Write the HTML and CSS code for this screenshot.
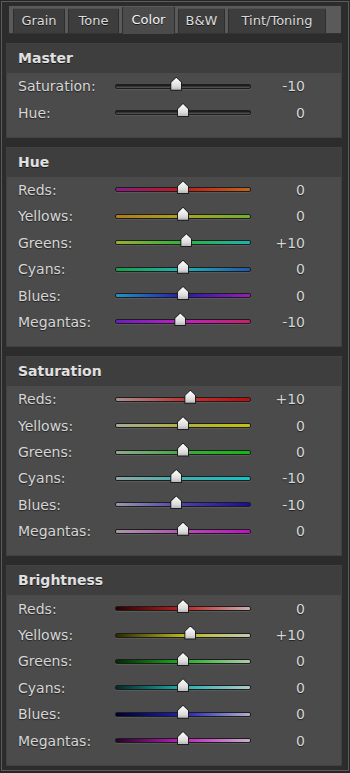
FILE: index.html
```html
<!doctype html>
<html>
  <head>
    <title>Color</title>
    <link rel="stylesheet" href="styles.css">
  </head>
  <body>
    <div class="window">
      <div class="tabs">
        <div class="tab tab-grain">Grain</div>
        <div class="tab tab-tone">Tone</div>
        <div class="tab tab-color tab-active">Color</div>
        <div class="tab tab-bw">B&amp;W</div>
        <div class="tab tab-tint">Tint/Toning</div>
      </div>

      <div class="panel">
        <div class="panel-head">Master</div>
        <div class="row"><span class="label">Saturation:</span><div class="track grey"><span class="thumb" style="left:45%"></span></div><span class="value">-10</span></div>
        <div class="row"><span class="label">Hue:</span><div class="track grey"><span class="thumb" style="left:50%"></span></div><span class="value">0</span></div>
      </div>

      <div class="panel">
        <div class="panel-head">Hue</div>
        <div class="row"><span class="label">Reds:</span><div class="track hue-reds"><span class="thumb" style="left:50%"></span></div><span class="value">0</span></div>
        <div class="row"><span class="label">Yellows:</span><div class="track hue-yellows"><span class="thumb" style="left:50%"></span></div><span class="value">0</span></div>
        <div class="row"><span class="label">Greens:</span><div class="track hue-greens"><span class="thumb" style="left:52.5%"></span></div><span class="value">+10</span></div>
        <div class="row"><span class="label">Cyans:</span><div class="track hue-cyans"><span class="thumb" style="left:50%"></span></div><span class="value">0</span></div>
        <div class="row"><span class="label">Blues:</span><div class="track hue-blues"><span class="thumb" style="left:50%"></span></div><span class="value">0</span></div>
        <div class="row"><span class="label">Megantas:</span><div class="track hue-magentas"><span class="thumb" style="left:48%"></span></div><span class="value">-10</span></div>
      </div>

      <div class="panel">
        <div class="panel-head">Saturation</div>
        <div class="row"><span class="label">Reds:</span><div class="track sat-reds"><span class="thumb" style="left:55.5%"></span></div><span class="value">+10</span></div>
        <div class="row"><span class="label">Yellows:</span><div class="track sat-yellows"><span class="thumb" style="left:50%"></span></div><span class="value">0</span></div>
        <div class="row"><span class="label">Greens:</span><div class="track sat-greens"><span class="thumb" style="left:50%"></span></div><span class="value">0</span></div>
        <div class="row"><span class="label">Cyans:</span><div class="track sat-cyans"><span class="thumb" style="left:45%"></span></div><span class="value">-10</span></div>
        <div class="row"><span class="label">Blues:</span><div class="track sat-blues"><span class="thumb" style="left:45%"></span></div><span class="value">-10</span></div>
        <div class="row"><span class="label">Megantas:</span><div class="track sat-magentas"><span class="thumb" style="left:50%"></span></div><span class="value">0</span></div>
      </div>

      <div class="panel">
        <div class="panel-head">Brightness</div>
        <div class="row"><span class="label">Reds:</span><div class="track bri-reds"><span class="thumb" style="left:50%"></span></div><span class="value">0</span></div>
        <div class="row"><span class="label">Yellows:</span><div class="track bri-yellows"><span class="thumb" style="left:55.5%"></span></div><span class="value">+10</span></div>
        <div class="row"><span class="label">Greens:</span><div class="track bri-greens"><span class="thumb" style="left:50%"></span></div><span class="value">0</span></div>
        <div class="row"><span class="label">Cyans:</span><div class="track bri-cyans"><span class="thumb" style="left:50%"></span></div><span class="value">0</span></div>
        <div class="row"><span class="label">Blues:</span><div class="track bri-blues"><span class="thumb" style="left:50%"></span></div><span class="value">0</span></div>
        <div class="row"><span class="label">Megantas:</span><div class="track bri-magentas"><span class="thumb" style="left:50%"></span></div><span class="value">0</span></div>
      </div>
    </div>
  </body>
</html>
```

FILE: styles.css
```css
body {
  margin: 0;
  padding: 0;
  width: 350px;
  height: 773px;
  background-color: #262626;
  font-family: 'DejaVu Sans', Verdana, sans-serif;
  color: #d4d4d4;
  overflow: hidden;
}
.window {
  box-sizing: border-box;
  margin: 1px;
  width: 348px;
  height: 770px;
  border: 1px solid #5c5c5c;
  background-color: #2c2c2c;
}

/* tab strip */
.tabs {
  box-sizing: border-box;
  display: flex;
  align-items: flex-end;
  gap: 3px;
  margin: 4px 0 0 7px;
  padding-left: 4px;
  width: 332px;
  height: 28px;
  background-color: #5a5a5a;
  border-bottom: 1px solid #333;
}
.tab {
  box-sizing: border-box;
  height: 25px;
  line-height: 24px;
  text-align: center;
  font-size: 13px;
  color: #dadada;
  background-color: #3d3d3d;
  border: 1px solid #2e2e2e;
  border-top-color: #505050;
  border-bottom: none;
  border-radius: 2px 2px 0 0;
  text-shadow: 0 1px 0 rgba(0, 0, 0, 0.6);
}
.tab-grain { width: 52px; }
.tab-tone { width: 51px; }
.tab-color { width: 53px; }
.tab-bw { width: 47px; }
.tab-tint { width: 98px; }
.tab-active {
  height: 28px;
  line-height: 25px;
  margin-bottom: -1px;
  color: #f2f2f2;
  background-color: #4b4b4b;
  border-color: #303030;
  border-top-color: #5a5a5a;
}

/* sections */
.panel {
  box-sizing: border-box;
  margin: 9px 0 0 4px;
  width: 336px;
  padding-bottom: 11px;
  background-color: #4b4b4b;
  border: 1px solid #414141;
}
.panel + .panel {
  margin-top: 9px;
}
.panel-head {
  height: 29px;
  line-height: 29px;
  padding-left: 11px;
  font-size: 14px;
  font-weight: bold;
  color: #e0e0e0;
  background-color: #3e3e3e;
  text-shadow: 0 1px 0 rgba(0, 0, 0, 0.6);
}
.row {
  display: grid;
  grid-template-columns: 97px 136px 54px;
  align-items: center;
  height: 26.4px;
  padding-left: 11px;
  font-size: 14px;
  text-shadow: 0 1px 1px rgba(0, 0, 0, 0.55);
}
.label {
  white-space: nowrap;
  color: #d6d6d6;
}
.value {
  text-align: right;
  color: #d6d6d6;
}

/* slider */
.track {
  position: relative;
  height: 3px;
  border: 1px solid #1d1d1d;
  border-radius: 2px;
  box-shadow: 0 1px 0 rgba(255, 255, 255, 0.08);
}
.thumb {
  position: absolute;
  top: -8px;
  width: 12px;
  height: 14px;
  margin-left: -6px;
  background-color: #1e1e1e;
  clip-path: polygon(50% 0, 100% 42%, 100% 100%, 0 100%, 0 42%);
}
.thumb::after {
  content: '';
  position: absolute;
  left: 1px;
  top: 1px;
  right: 1px;
  bottom: 1px;
  background: linear-gradient(#ffffff, #dcdcdc 70%, #b8b8b8);
  clip-path: polygon(50% 0, 100% 40%, 100% 100%, 0 100%, 0 40%);
}

.grey { background: linear-gradient(#111, #5a5a5a); }

.hue-reds { background: linear-gradient(90deg, #8a1a86, #c01a1a 50%, #c0661a); }
.hue-yellows { background: linear-gradient(90deg, #b07a1a, #a8a420 50%, #70b030); }
.hue-greens { background: linear-gradient(90deg, #98b030, #30b040 50%, #20b0ac); }
.hue-cyans { background: linear-gradient(90deg, #18a048, #20b0b0 50%, #2058b0); }
.hue-blues { background: linear-gradient(90deg, #2094c0, #2a18b0 50%, #9420b0); }
.hue-magentas { background: linear-gradient(90deg, #6a1cc0, #c020c0 50%, #c8206a); }

.sat-reds { background: linear-gradient(90deg, #a89090, #c03434 50%, #b80e0e); }
.sat-yellows { background: linear-gradient(90deg, #a8a898, #b0b040 50%, #c4c010); }
.sat-greens { background: linear-gradient(90deg, #90a890, #40a840 50%, #10b810); }
.sat-cyans { background: linear-gradient(90deg, #90a8a8, #40b0b0 50%, #10c4c4); }
.sat-blues { background: linear-gradient(90deg, #9898b0, #4a40a8 50%, #1a0c98); }
.sat-magentas { background: linear-gradient(90deg, #a898a8, #b050b0 50%, #c010c0); }

.bri-reds { background: linear-gradient(90deg, #2a0000, #c02020 50%, #c8b0b0); }
.bri-yellows { background: linear-gradient(90deg, #2a2a00, #b8b820 50%, #c8c8b0); }
.bri-greens { background: linear-gradient(90deg, #002a00, #20b020 50%, #b0c8b0); }
.bri-cyans { background: linear-gradient(90deg, #002a2a, #20b0b0 50%, #b0c8c8); }
.bri-blues { background: linear-gradient(90deg, #00002a, #2020b8 50%, #b0b0c8); }
.bri-magentas { background: linear-gradient(90deg, #2a002a, #c020c0 50%, #c8b0c8); }
```
